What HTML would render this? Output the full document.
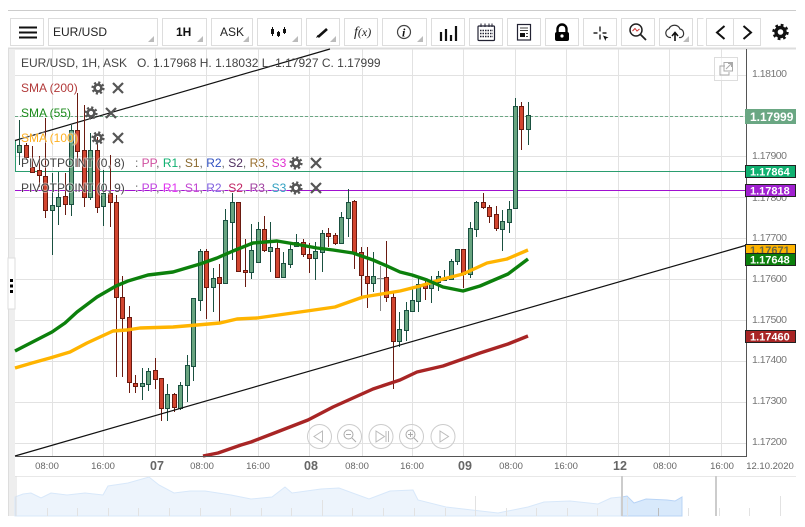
<!DOCTYPE html>
<html><head><meta charset="utf-8"><style>
html,body{margin:0;padding:0;background:#fff}
svg{display:block}
text{font-family:"Liberation Sans",sans-serif}
.ax{font-size:10.5px;fill:#777}
.t{font-size:9.5px;fill:#666;text-anchor:middle}
.d{font-size:12.5px;font-weight:bold;fill:#666;text-anchor:middle}
.l{font-size:12px;paint-order:stroke;stroke:rgba(255,255,255,.45);stroke-width:2px}
.b{fill:#fff;stroke:#ddd}
.v{font-size:11px;font-weight:bold;fill:#fff}
</style></head><body>
<svg width="805" height="527" viewBox="0 0 805 527" xmlns="http://www.w3.org/2000/svg">
<defs>
<g id="g"><circle r="3.4" fill="none" stroke="#555" stroke-width="2.6"/><circle r="5.4" fill="none" stroke="#555" stroke-width="2.4" stroke-dasharray="2.12 2.12"/></g>
<path id="x" d="M-5-5L5 5M5-5L-5 5" stroke="#555" stroke-width="2.2" fill="none"/>
<path id="tri" d="M0 6H6V0Z" fill="#bbb"/>
</defs>
<rect width="805" height="527" fill="#fff"/>
<path d="M8 10.5H796" stroke="#ccc"/>
<!-- toolbar -->
<rect class="b" x="10.5" y="18.5" width="33" height="27"/>
<rect class="b" x="48.5" y="18.5" width="109" height="27"/>
<rect class="b" x="162.5" y="18.5" width="44" height="27"/>
<rect class="b" x="211.5" y="18.5" width="41" height="27"/>
<rect class="b" x="257.5" y="18.5" width="44" height="27"/>
<rect class="b" x="306.5" y="18.5" width="33" height="27"/>
<rect class="b" x="344.5" y="18.5" width="33" height="27"/>
<rect class="b" x="382.5" y="18.5" width="44" height="27"/>
<rect class="b" x="431.5" y="18.5" width="33" height="27"/>
<rect class="b" x="469.5" y="18.5" width="33" height="27"/>
<rect class="b" x="507.5" y="18.5" width="33" height="27"/>
<rect class="b" x="545.5" y="18.5" width="33" height="27"/>
<rect class="b" x="583.5" y="18.5" width="33" height="27"/>
<rect class="b" x="621.5" y="18.5" width="33" height="27"/>
<rect class="b" x="659.5" y="18.5" width="33" height="27"/>
<path d="M703.5 18.5H697.5V45.5H703.5" fill="none" stroke="#ddd"/>
<rect class="b" x="706.5" y="18.5" width="54" height="27"/>
<path d="M733.5 18.5V45.5" stroke="#ddd"/>
<use href="#tri" x="148" y="36"/><use href="#tri" x="197" y="36"/><use href="#tri" x="243" y="36"/><use href="#tri" x="292" y="36"/><use href="#tri" x="330" y="36"/><use href="#tri" x="417" y="36"/><use href="#tri" x="683" y="36"/>
<path d="M19 27.5H37M19 32.5H37M19 37.5H37" stroke="#111" stroke-width="2"/>
<text x="53" y="36" font-size="12" fill="#222">EUR/USD</text>
<text x="176" y="36" font-size="12" font-weight="bold" fill="#111">1H</text>
<text x="220" y="36" font-size="12" fill="#222">ASK</text>
<path d="M272.5 27V36M278.5 31V37M284.5 27V34" stroke="#111" stroke-width="1"/><path d="M271 29h3v5h-3zM277 32h3v4h-3zM283 29h3v4h-3z" fill="#111"/>
<path d="M318 37L327 29" stroke="#111" stroke-width="2.6"/><path d="M316 38l1.5-3 1.5 1.5z" fill="#111"/>
<text x="354" y="36" font-size="12" font-style="italic" fill="#222" style="font-family:'Liberation Serif',serif"><tspan font-size="14">f</tspan>(x)</text>
<circle cx="404" cy="32" r="6.500" fill="none" stroke="#444" stroke-width="1.200"/>
<text x="402" y="36.500" font-size="12" font-weight="bold" font-style="italic" fill="#111" style="font-family:'Liberation Serif',serif">i</text>
<path d="M441 41V32M446 41V29M451 41V35M456 41V26" stroke="#111" stroke-width="2.200"/>
<rect x="478" y="26" width="16.500" height="14.500" rx="1" fill="#fff" stroke="#223" stroke-width="1.200"/>
<path d="M481 23.500V27M485 23.500V27M489 23.500V27M492 23.500V27" stroke="#223"/>
<path d="M480 30.500H493M480 33.500H493M480 36.500H493" stroke="#223" stroke-width="1.600" stroke-dasharray="1.500 1"/>
<rect x="517.500" y="24.500" width="13" height="15.500" fill="#fff" stroke="#223" stroke-width="1.200"/>
<path d="M520 28H528M520 30.500H528M526 33.500H528M526 36.500H528" stroke="#444"/><rect x="520" y="33" width="5" height="4" fill="#111"/>
<path d="M557.500 33V29a4.500 4.500 0 0 1 9 0V33" fill="none" stroke="#000" stroke-width="2.400"/><rect x="555" y="32" width="14" height="9" rx="2" fill="#000"/><circle cx="562" cy="36" r="1.600" fill="#fff"/>
<path d="M600 26.500V31.500M600 34.500V39.500M593.500 33H597.500M602.500 33H606.500" stroke="#222" stroke-width="1.400"/><path d="M603 35.500L608.500 37.500 606 38.500 605.500 41Z" fill="#111"/>
<circle cx="636" cy="30" r="6" fill="#fff" stroke="#222" stroke-width="1.500"/><path d="M640.500 34.500L646 40" stroke="#222" stroke-width="1.800"/><path d="M632.500 31L635 28.500 637 31 639.500 29" fill="none" stroke="#c33"/>
<path d="M671 37.500H670a4.500 4.500 0 0 1-1-8.800 6 6 0 0 1 11 .3 4.500 4.500 0 0 1 1 8.500H679" fill="none" stroke="#333" stroke-width="1.200"/><path d="M675 41V33M672 36L675 32.500 678 36" fill="none" stroke="#111" stroke-width="1.600"/>
<path d="M724.500 26L717 32.500 724.500 39" fill="none" stroke="#111" stroke-width="2"/>
<path d="M743.500 26L751 32.500 743.500 39" fill="none" stroke="#111" stroke-width="2"/>
<g transform="translate(780.500 32)"><circle r="4.500" fill="none" stroke="#111" stroke-width="3.400"/><circle r="6.800" fill="none" stroke="#111" stroke-width="2.800" stroke-dasharray="2.670 2.670"/></g>
<path d="M8 48.500H796" stroke="#ddd" stroke-width="2"/>
<!-- left strip -->
<rect x="8" y="49" width="7" height="467" fill="#eee"/>
<path d="M8.500 49V516" stroke="#ddd"/>
<rect x="8" y="258" width="7" height="51" fill="#fff" stroke="#ddd"/>
<path d="M10 279h3v3h-3zM10 284.500h3v3h-3zM10 290h3v3h-3z" fill="#000"/>
<!-- grid -->
<path d="M15 75.500H746M15 116.500H746M15 156.500H746M15 197.500H746M15 238.500H746M15 279.500H746M15 320.500H746M15 361.500H746M15 402.500H746M15 443.500H746M52.500 49V456M103.500 49V456M155.500 49V456M206.500 49V456M258.500 49V456M309.500 49V456M362.500 49V456M412.500 49V456M463.500 49V456M515.500 49V456M566.500 49V456M618.500 49V456M669.500 49V456M721.500 49V456" stroke="#e2e2e2" stroke-width="1"/>
<!-- horizontals -->
<path d="M15 116.500H746" stroke="#6aa783" stroke-dasharray="3 2"/>
<path d="M15 171.500H746" stroke="#2a9d6f"/>
<path d="M15 190.500H746" stroke="#a010d0"/>
<path d="M15.500 140V171" stroke="#2a9d6f"/>
<!-- trend lines -->
<path d="M15 140.500L330 49" stroke="#111" stroke-width="1.200" fill="none"/>
<!-- wicks -->
<path stroke="#6a1a10" fill="none" d="M26.500 143V160M32.500 146V173M39.500 156V187M45.500 118V218M65.500 173V215M77.500 93V167M84.500 105V207M97.500 137V213M110.500 155V227M116.500 195V377M122.500 276V377M129.500 306V393M135.500 375V393M155.500 358V389M161.500 378V421M174.500 393V412M206.500 249V319M219.500 264V322M238.500 202V271M245.500 239V287M264.500 216V252M277.500 240V278M303.500 239V257M309.500 243V273M328.500 228V247M335.500 233V245M354.500 200V269M361.500 247V296M367.500 247V308M386.500 241V302M393.500 293V389M425.500 279V300M463.500 249V288M483.500 193V209M489.500 205V223M496.500 206V231M521.500 102V150"/>
<path stroke="#1a5040" fill="none" d="M19.500 120V165M52.500 173V255M58.500 172V225M71.500 125V216M90.500 133V200M103.500 170V226M142.500 368V400M148.500 368V391M167.500 384V421M180.500 382V410M187.500 355V402M193.500 298V381M200.500 249V311M213.500 268V312M225.500 209V283M232.500 193V260M251.500 224V279M258.500 222V263M270.500 222V272M283.500 252V278M290.500 243V268M296.500 234V247M315.500 242V280M322.500 230V272M341.500 212V244M348.500 189V237M373.500 252V292M399.500 312V347M406.500 302V341M412.500 288V312M418.500 278V312M431.500 276V303M438.500 271V291M444.500 270V280M451.500 259V279M457.500 249V265M470.500 222V278M476.500 201V237M502.500 210V251M509.500 201V233M515.500 98V209M528.500 102V145"/>
<path stroke="#888" fill="none" d="M380.500 266V311M377 278.500H384"/>
<!-- bodies -->
<path fill="#d2452f" stroke="#6a1a10" d="M24.500 145.500h4v12h-4zM30.500 167.500h4v5h-4zM37.500 170.500h4v5h-4zM43.500 176.500h4v34h-4zM63.500 196.500h4v8h-4zM75.500 130.500h4v21h-4zM82.500 150.500h4v47h-4zM95.500 150.500h4v57h-4zM108.500 193.500h4v9h-4zM114.500 202.500h4v95h-4zM120.500 297.500h4v21h-4zM127.500 317.500h4v65h-4zM133.500 383.500h4v3h-4zM153.500 370.500h4v9h-4zM159.500 378.500h4v30h-4zM172.500 394.500h4v13h-4zM204.500 251.500h4v36h-4zM217.500 277.500h4v6h-4zM236.500 202.500h4v69h-4zM243.500 270.500h4v2h-4zM262.500 229.500h4v21h-4zM275.500 248.500h4v29h-4zM301.500 242.500h4v12h-4zM307.500 254.500h4v4h-4zM326.500 233.500h4v3h-4zM333.500 235.500h4v8h-4zM352.500 201.500h4v52h-4zM359.500 252.500h4v23h-4zM365.500 276.500h4v7h-4zM384.500 277.500h4v20h-4zM391.500 297.500h4v44h-4zM423.500 284.500h4v4h-4zM461.500 249.500h4v25h-4zM481.500 202.500h4v5h-4zM487.500 207.500h4v9h-4zM494.500 214.500h4v14h-4zM519.500 106.500h4v23h-4z"/>
<path fill="#68a480" stroke="#1a5040" d="M17.500 145.500h4v7h-4zM50.500 205.500h4v5h-4zM56.500 197.500h4v9h-4zM69.500 130.500h4v74h-4zM88.500 150.500h4v47h-4zM101.500 193.500h4v13h-4zM140.500 383.500h4v3h-4zM146.500 371.500h4v13h-4zM165.500 394.500h4v14h-4zM178.500 385.500h4v23h-4zM185.500 365.500h4v20h-4zM191.500 298.500h4v68h-4zM198.500 251.500h4v49h-4zM211.500 278.500h4v9h-4zM223.500 220.500h4v63h-4zM230.500 202.500h4v20h-4zM249.500 250.500h4v22h-4zM256.500 229.500h4v33h-4zM268.500 247.500h4v4h-4zM281.500 263.500h4v14h-4zM288.500 249.500h4v15h-4zM294.500 242.500h4v4h-4zM313.500 251.500h4v7h-4zM320.500 233.500h4v19h-4zM339.500 217.500h4v26h-4zM346.500 202.500h4v16h-4zM371.500 276.500h4v7h-4zM397.500 329.500h4v12h-4zM404.500 310.500h4v20h-4zM410.500 300.500h4v11h-4zM416.500 284.500h4v17h-4zM429.500 281.500h4v7h-4zM436.500 276.500h4v6h-4zM442.500 278.500h4v2h-4zM449.500 261.500h4v18h-4zM455.500 249.500h4v12h-4zM468.500 228.500h4v46h-4zM474.500 202.500h4v27h-4zM500.500 221.500h4v8h-4zM507.500 209.500h4v13h-4zM513.500 106.500h4v102h-4zM526.500 115.500h4v14h-4z"/>
<!-- SMAs -->
<path fill="none" stroke="#ffb400" stroke-width="3.400" stroke-linejoin="round" d="M15 368L32 363 50 358 70 352 87 343 113 331 127 330 140 328 173 327 197 325 220 323 237 319 257 318 307 311 335 307 363 297 400 291 420 286 443 279 463 274 487 263 507 259 528 250"/>
<path fill="none" stroke="#0c800c" stroke-width="3.400" stroke-linejoin="round" d="M15 351L52 332 65 323 77 312 97 297 116 286 128 281 148 275 173 272 200 264 217 258 233 251 253 243 277 241 295 244 317 248 333 250 353 253 373 260 387 266 400 272 412 275 427 280 443 287 463 291 480 286 508 274 528 259"/>
<path fill="none" stroke="#a82525" stroke-width="3.400" stroke-linejoin="round" d="M203 456L218 453 241 445 251 442 277 432 308 420 333 407 373 389 400 380 417 372 443 366 480 353 508 344 528 336"/>
<path d="M15 456L747 245" stroke="#111" stroke-width="1.200" fill="none"/>
<!-- legend -->
<text class="l" x="21" y="67" fill="#444" style="stroke:none">EUR/USD, 1H, ASK &#160; O. 1.17968 H. 1.18032 L. 1.17927 C. 1.17999</text>
<text class="l" x="21" y="92" fill="#b23a3a">SMA (200)</text>
<use href="#g" x="98" y="88"/><use href="#x" x="118" y="88"/>
<text class="l" x="21" y="117" fill="#1a8a1a">SMA (55)</text>
<use href="#g" x="91" y="113"/><use href="#x" x="111" y="113"/>
<text class="l" x="21" y="142" fill="#ffb020">SMA (100)</text>
<use href="#g" x="98" y="138"/><use href="#x" x="118" y="138"/>
<text class="l" x="21" y="167" fill="#444">PIVOTPOINT (0, 8)</text>
<text class="l" x="135" y="167" fill="#666">: <tspan fill="#d050a0">PP</tspan>, <tspan fill="#10b070">R1</tspan>, <tspan fill="#8a6a30">S1</tspan>, <tspan fill="#3050c0">R2</tspan>, <tspan fill="#503060">S2</tspan>, <tspan fill="#9a7030">R3</tspan>, <tspan fill="#e030d0">S3</tspan></text>
<use href="#g" x="296" y="163"/><use href="#x" x="316" y="163"/>
<text class="l" x="21" y="192" fill="#444">PIVOTPOINT (0, 9)</text>
<text class="l" x="135" y="192" fill="#666">: <tspan fill="#c040e0">PP</tspan>, <tspan fill="#e030f0">R1</tspan>, <tspan fill="#c040d0">S1</tspan>, <tspan fill="#8060e0">R2</tspan>, <tspan fill="#c02060">S2</tspan>, <tspan fill="#a040a0">R3</tspan>, <tspan fill="#30a0c0">S3</tspan></text>
<use href="#g" x="296" y="188"/><use href="#x" x="316" y="188"/>
<!-- expand -->
<rect x="714.500" y="57.500" width="23" height="23" fill="#fff" fill-opacity=".6" stroke="#ddd"/>
<path d="M724 62.500H732.500V71H724ZM725 66H720V75H729V72M726 69L731 64M728 63.500H731.500V67" fill="none" stroke="#aaa"/>
<!-- axes -->
<path d="M746.500 49V457M15 456.500H747" stroke="#555"/>
<g class="ax"><text x="752" y="77" textLength="35">1.18100</text><text x="752" y="159" textLength="35">1.17900</text><text x="752" y="201" textLength="35">1.17800</text><text x="752" y="241" textLength="35">1.17700</text><text x="752" y="282" textLength="35">1.17600</text><text x="752" y="323" textLength="35">1.17500</text><text x="752" y="363" textLength="35">1.17400</text><text x="752" y="404" textLength="35">1.17300</text><text x="752" y="445" textLength="35">1.17200</text></g>
<!-- price tags -->
<rect x="745" y="109" width="51" height="15" fill="#6aa783"/><text x="750" y="121" font-size="12" font-weight="bold" fill="#fff">1.17999</text>
<rect x="745.500" y="165.500" width="50" height="12" fill="#10b070" stroke="#222"/><text class="v" x="750" y="175.500">1.17864</text>
<rect x="745.500" y="184.500" width="50" height="12" fill="#a020d0" stroke="#222"/><text class="v" x="750" y="194.500">1.17818</text>
<rect x="745.500" y="244.500" width="50" height="10" fill="#ffb400" stroke="#222"/><text x="750" y="254" font-size="11" font-weight="bold" fill="#664">1.17671</text>
<rect x="745.500" y="253.500" width="50" height="12" fill="#0c800c" stroke="#222"/><text class="v" x="750" y="263.500">1.17648</text>
<rect x="745.500" y="330.500" width="50" height="12" fill="#a82525" stroke="#222"/><text class="v" x="750" y="340.500">1.17460</text>
<!-- time axis -->
<text class="t" x="47" y="469">08:00</text><text class="t" x="103" y="469">16:00</text><text class="d" x="157" y="470">07</text>
<text class="t" x="202" y="469">08:00</text><text class="t" x="258" y="469">16:00</text><text class="d" x="311" y="470">08</text>
<text class="t" x="357" y="469">08:00</text><text class="t" x="412" y="469">16:00</text><text class="d" x="465" y="470">09</text>
<text class="t" x="511" y="469">08:00</text><text class="t" x="566" y="469">16:00</text><text class="d" x="620" y="470">12</text>
<text class="t" x="665" y="469">08:00</text><text class="t" x="722" y="469">16:00</text><text class="t" x="770" y="469">12.10.2020</text>
<!-- chart nav buttons -->
<g fill="#fff" fill-opacity=".3" stroke="#ccc">
<circle cx="319.500" cy="436.500" r="12"/><circle cx="349.500" cy="436.500" r="12"/><circle cx="381" cy="436.500" r="12"/><circle cx="411.500" cy="436.500" r="12"/><circle cx="443" cy="436.500" r="12"/>
<path d="M322.500 431L314 436.500 322.500 442Z" fill="none" stroke="#bbb"/>
<circle cx="348.500" cy="434.500" r="4.500" fill="none" stroke="#aaa"/><path d="M346 434.500H351M352 438L356 442" fill="none" stroke="#aaa"/>
<path d="M376 431L384.500 436.500 376 442ZM386 431V442M388.500 431V442" fill="none" stroke="#bbb"/>
<circle cx="410.500" cy="434.500" r="4.500" fill="none" stroke="#aaa"/><path d="M408 434.500H413M410.500 432V437M414 438L418 442" fill="none" stroke="#aaa"/>
<path d="M440 431L448.500 436.500 440 442Z" fill="none" stroke="#bbb"/>
</g>
<!-- navigator -->
<path d="M15 476.500H796" stroke="#e8e8e8"/>
<path fill="#edf4fc" stroke="#d8e8fa" d="M15 497L23 494 31 493 41 498 51 493 67 495 85 493 103 495 108 486 128 483 149 477 159 485 174 493 190 491 205 491 231 495 251 499 272 497 285 487 292 493 321 489 339 488 369 499 390 491 413 490 418 500 446 507 472 510 498 513 528 507 544 502 570 501 598 504 611 498 621 497V516H15Z"/>
<path fill="#d8e9fb" stroke="#b8d4f6" d="M622 497L627 496 634 503 646 499 667 500 675 501 682 497V516H622Z"/>
<path d="M47.500 508V516M77.500 508V516M108.500 508V516M138.500 508V516M169.500 508V516M200.500 508V516M230.500 508V516M261.500 508V516M291.500 508V516M322.500 500V516M352.500 508V516M383.500 508V516M414.500 508V516M445.500 508V516M475.500 496V516M506.500 508V516M536.500 508V516M567.500 508V516M597.500 508V516M627.500 497V516M688.500 508V516M719.500 508V516M749.500 508V516M780.500 496V516" stroke="#e2e2e2"/>
<path d="M658.500 508V516" stroke="#bbb"/>
<path d="M622 476V516M716 476V516" stroke="#ccc" stroke-width="2"/>
<path d="M16 476V516" stroke="#ddd"/>
</svg>
</body></html>
